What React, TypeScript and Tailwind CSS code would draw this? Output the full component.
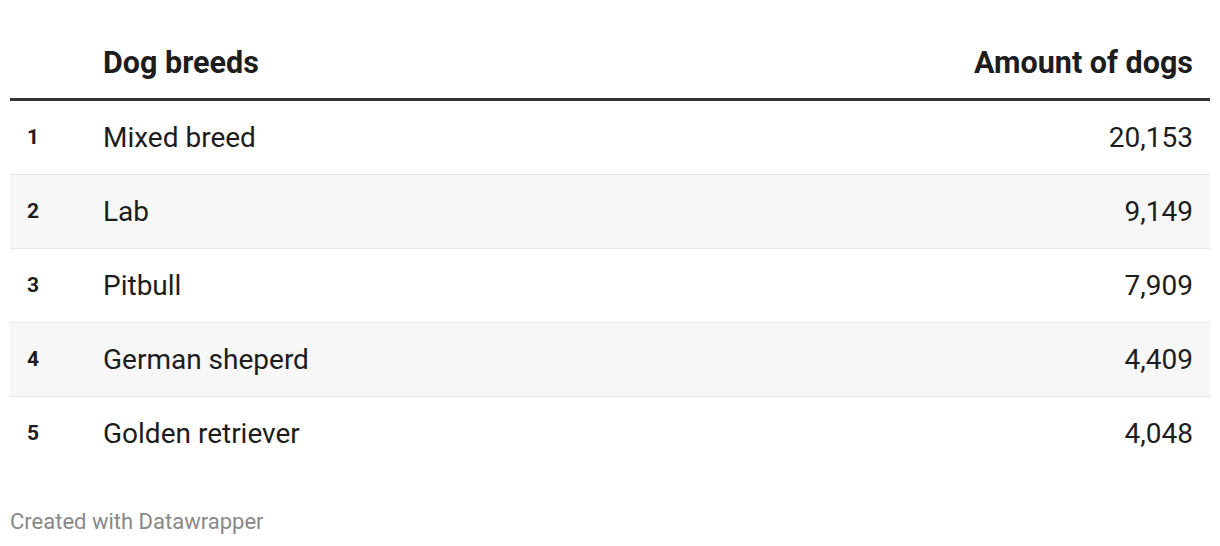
import React from "react";

const rows = [
  { rank: 1, name: "Mixed breed", value: "20,153" },
  { rank: 2, name: "Lab", value: "9,149" },
  { rank: 3, name: "Pitbull", value: "7,909" },
  { rank: 4, name: "German sheperd", value: "4,409" },
  { rank: 5, name: "Golden retriever", value: "4,048" },
];

export default function App() {
  return (
    <div className="w-[1220px] h-[546px] bg-white font-['Roboto',sans-serif] text-[#1d1d1d]">
      <div className="mx-[10px] pt-[45px]">
        <div className="flex items-end border-b-[3px] border-[#333333] pb-[17px]">
          <div className="w-[93px]" />
          <div className="flex-1 text-[30.5px] font-bold leading-[36px]">Dog breeds</div>
          <div className="text-[30.5px] font-bold leading-[36px] pr-[17px]">Amount of dogs</div>
        </div>
        {rows.map((r, i) => (
          <div
            key={r.rank}
            className={`flex items-center h-[74px] ${i < rows.length - 1 ? "border-b border-[#e6e6e6]" : ""} ${i % 2 === 1 ? "bg-[#f7f7f7]" : "bg-white"}`}
          >
            <div className="w-[93px] pl-[17px] text-[21px] font-bold">{r.rank}</div>
            <div className="flex-1 text-[28px]">{r.name}</div>
            <div className="text-[28px] pr-[17px]">{r.value}</div>
          </div>
        ))}
        <div className="mt-[38px] text-[22px] leading-[26px] text-[#888888]">Created with Datawrapper</div>
      </div>
    </div>
  );
}
